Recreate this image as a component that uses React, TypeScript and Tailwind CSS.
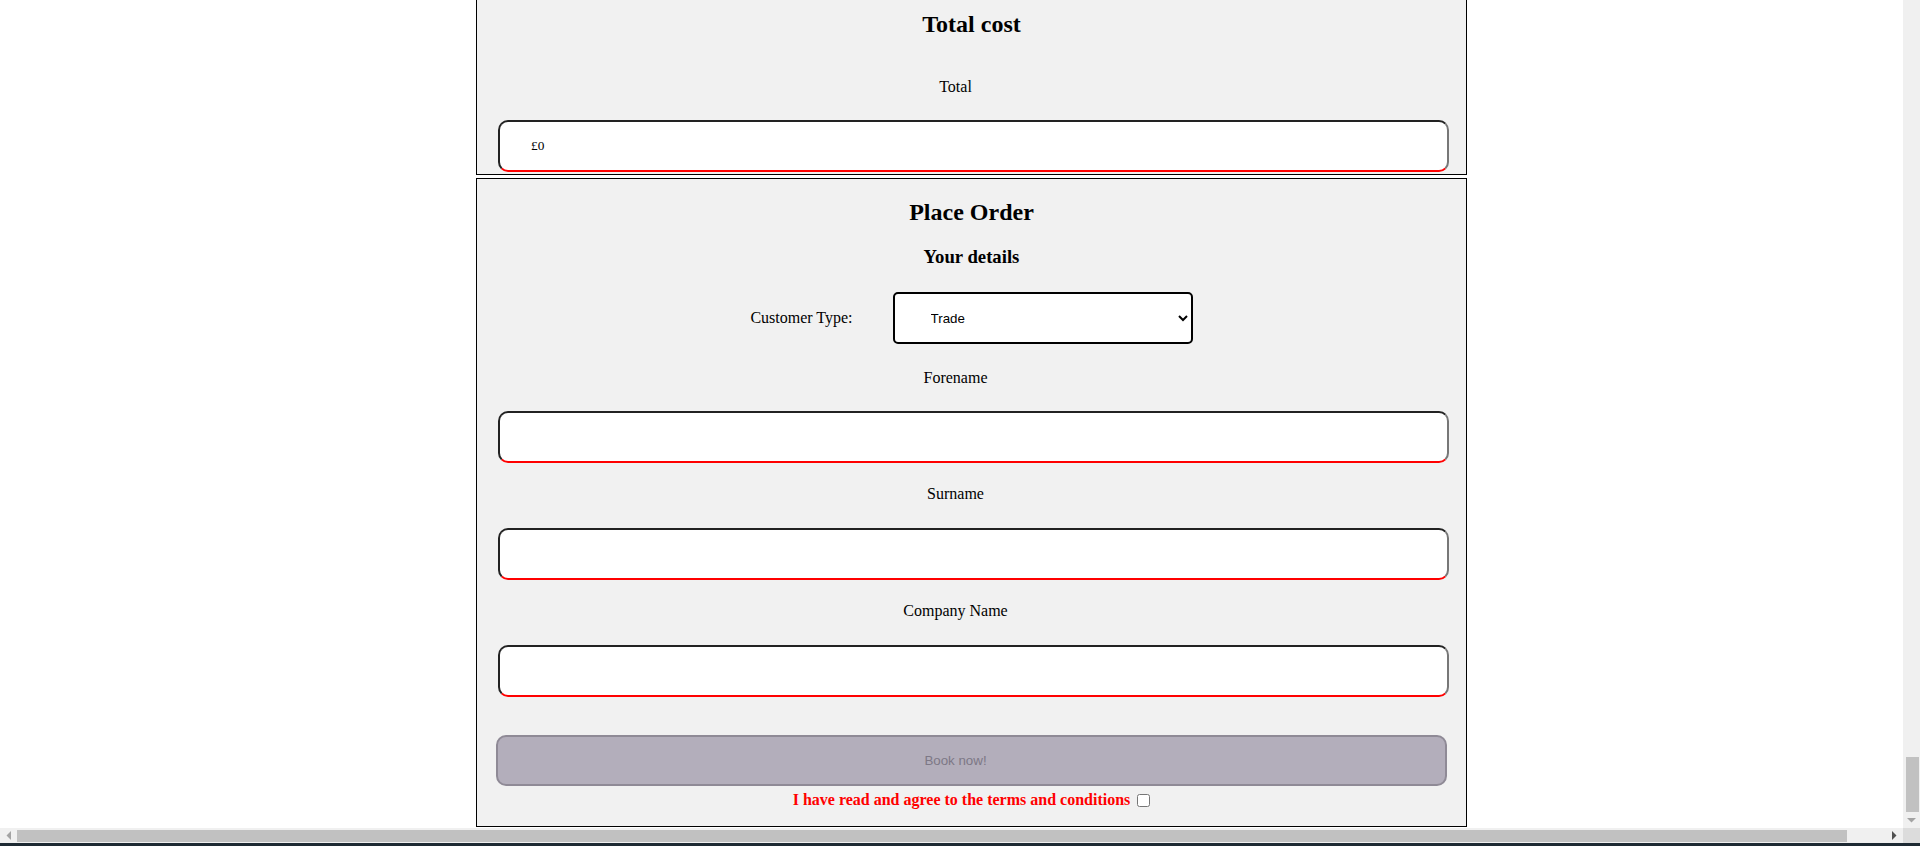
import React from "react";

function Label({ children, className = "" }: { children: React.ReactNode; className?: string }) {
  return (
    <div className={"h-[18px] leading-[18px] text-[16px] text-center pr-[32px] text-black " + className}>
      {children}
    </div>
  );
}

function TextBox({ value = "", className = "" }: { value?: string; className?: string }) {
  return (
    <input
      readOnly
      value={value}
      className={
        "block ml-[21px] w-[951px] h-[52px] bg-white rounded-[10px] border-2 border-t-[#222222] border-l-[#222222] border-r-[#777777] border-b-[#ff0000] pl-[31px] text-[13.33px] font-['Liberation_Serif',serif] text-black outline-none " +
        className
      }
    />
  );
}

export default function App() {
  return (
    <div className="w-[1920px] h-[846px] overflow-hidden bg-white flex flex-col font-['Liberation_Serif','Times_New_Roman',serif] text-black">
      <div className="flex h-[828px]">
        <div className="flex-1 overflow-hidden">
          <div className="ml-[476px] w-[991px]">
            {/* Total cost panel (top scrolled off) */}
            <div className="border-x border-b border-black bg-[#f1f1f1] pt-[11px] pb-[2px]">
              <h2 className="text-[24px] leading-[27px] font-bold text-center">Total cost</h2>
              <Label className="mt-[40px]">Total</Label>
              <TextBox value="£0" className="mt-[24px]" />
            </div>

            {/* Place Order panel */}
            <div className="mt-[3px] border border-black bg-[#f1f1f1] pt-[20px] pb-[17px]">
              <h2 className="text-[24px] leading-[27px] font-bold text-center">Place Order</h2>
              <h3 className="mt-[20px] text-[18.72px] leading-[21px] font-bold text-center">Your details</h3>
              <div className="mt-[25px] flex justify-center items-center gap-[40px]">
                <span className="text-[16px] leading-[18px]">Customer Type:</span>
                <select
                  defaultValue="Trade"
                  className="w-[300px] h-[52px] bg-white border-2 border-black rounded-[5px] pl-[32px] pr-[8px] text-[13.33px] font-['Liberation_Sans',Arial,sans-serif] text-black outline-none"
                >
                  <option>Trade</option>
                  <option>Retail</option>
                </select>
              </div>
              <Label className="mt-[25px]">Forename</Label>
              <TextBox className="mt-[24px]" />
              <Label className="mt-[22px]">Surname</Label>
              <TextBox className="mt-[25px]" />
              <Label className="mt-[22px]">Company Name</Label>
              <TextBox className="mt-[25px]" />
              <button
                disabled
                className="block mt-[38px] ml-[19px] w-[951px] h-[51px] rounded-[10px] border-2 border-[#8f8a96] bg-[#b3aebb] pr-[32px] text-[#7d7886] text-[13.33px] font-['Liberation_Sans',Arial,sans-serif]"
              >
                Book now!
              </button>
              <div className="mt-[5px] h-[18px] flex justify-center items-center">
                <span className="text-[16px] leading-[18px] font-bold text-[#ff0000]">
                  I have read and agree to the terms and conditions
                </span>
                <input type="checkbox" className="ml-[7px] w-[13px] h-[13px] mt-[1px]" />
              </div>
            </div>
          </div>
        </div>

        {/* vertical scrollbar */}
        <div className="w-[17px] bg-[#f0f0f0] flex flex-col items-center">
          <div className="flex-1" />
          <div className="w-[13px] h-[55px] bg-[#c1c1c1] ml-[1px]" />
          <div className="h-[16px] w-full flex items-center justify-center">
            <svg width="9" height="5" viewBox="0 0 9 5">
              <polygon points="0,0 9,0 4.5,4.5" fill="#a3a3a3" />
            </svg>
          </div>
        </div>
      </div>

      {/* horizontal scrollbar */}
      <div className="h-[15px] flex bg-[#f0f0f0]">
        <div className="w-[17px] flex items-center justify-center">
          <svg width="5" height="9" viewBox="0 0 5 9">
            <polygon points="5,0 5,9 0.5,4.5" fill="#a3a3a3" />
          </svg>
        </div>
        <div className="w-[1830px] h-[12px] mt-[2px] bg-[#c1c1c1]" />
        <div className="flex-1 flex items-center justify-end pr-[6px]">
          <svg width="5" height="9" viewBox="0 0 5 9">
            <polygon points="0,0 0,9 4.5,4.5" fill="#505050" />
          </svg>
        </div>
        <div className="w-[17px] bg-[#dcdcdc]" />
      </div>
      <div className="h-[3px] bg-[#1e2a33]" />
    </div>
  );
}
